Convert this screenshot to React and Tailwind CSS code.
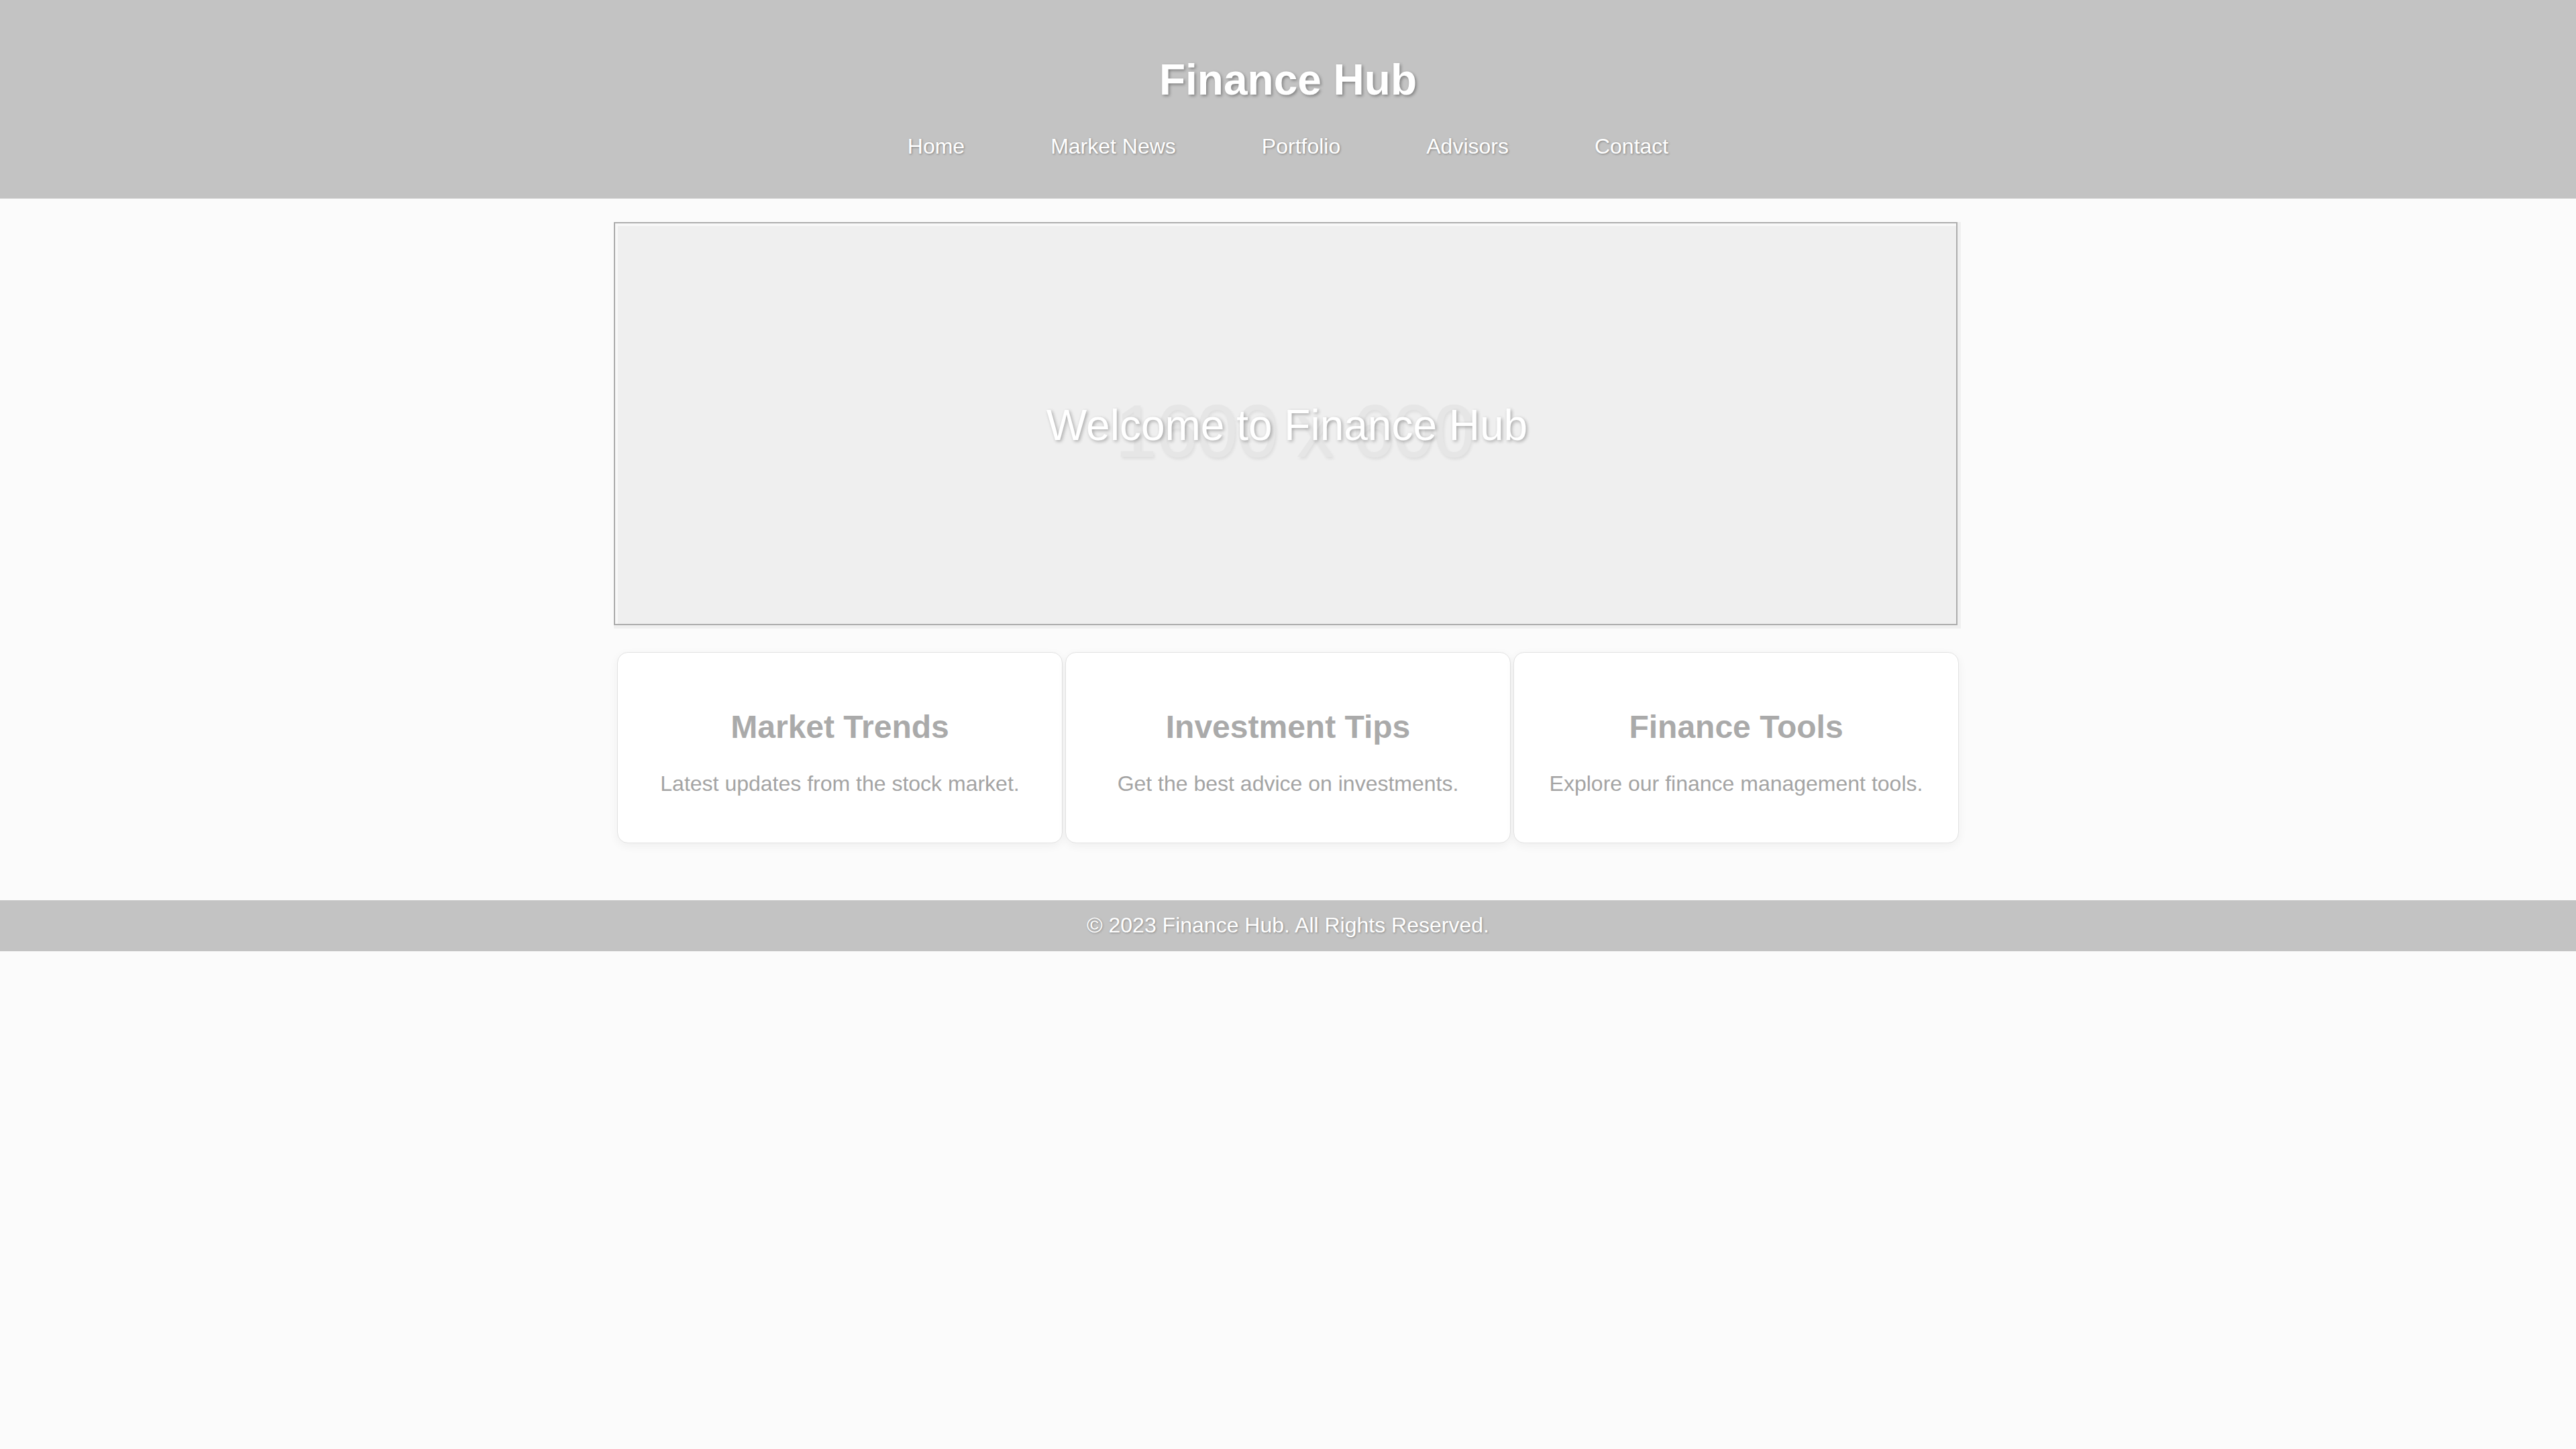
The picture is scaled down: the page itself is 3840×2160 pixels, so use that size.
import React from "react";

const links = ["Home", "Market News", "Portfolio", "Advisors", "Contact"];

const cards = [
  { title: "Market Trends", text: "Latest updates from the stock market." },
  { title: "Investment Tips", text: "Get the best advice on investments." },
  { title: "Finance Tools", text: "Explore our finance management tools." },
];

export default function App() {
  return (
    <div className="min-h-screen bg-[#fbfbfb] font-['Liberation_Sans',Arial,sans-serif]">
      {/* Header */}
      <header className="bg-[#c3c3c3] pt-[82px] pb-[59px] text-center text-white">
        <h1 className="text-[64px] font-bold leading-[74px] [text-shadow:2px_2px_4px_rgba(0,0,0,0.35)]">
          Finance Hub
        </h1>
        <nav className="mt-[44px] flex justify-center gap-[128px] text-[32px] leading-[37px] [text-shadow:1px_1px_3px_rgba(0,0,0,0.35)]">
          {links.map((l) => (
            <a key={l} href="#" className="text-white">
              {l}
            </a>
          ))}
        </nav>
      </header>

      {/* Main */}
      <main className="mx-auto w-[2000px] pt-[35px] pb-[85px]">
        {/* Hero */}
        <div className="-ml-[5px] -mr-[3px] h-[606px] bg-[#f0f0f0] pr-[5px] pb-[5px]">
          <div className="h-full border-2 border-[#adadad] bg-[#f8f8f8] pt-[4px] pl-[4px]">
            <div className="relative h-full bg-[#efefef]">
              <div className="absolute inset-0 flex items-center justify-center pl-[22px] pt-[18px]">
                <span className="text-[112px] leading-none tracking-[-2px] text-[#e6e6e6] [text-shadow:2px_3px_4px_rgba(0,0,0,0.07)]">
                  1600 x 600
                </span>
              </div>
              <div className="absolute inset-0 flex items-center justify-center">
                <h2 className="text-[64px] leading-[74px] text-white [text-shadow:2px_2px_5px_rgba(0,0,0,0.3)]">
                  Welcome to Finance Hub
                </h2>
              </div>
            </div>
          </div>
        </div>

        {/* Cards */}
        <div className="mt-[35px] grid grid-cols-3 gap-[4px]">
          {cards.map((c) => (
            <div
              key={c.title}
              className="rounded-[16px] border border-[#e2e2e2] bg-white pt-[83px] pb-[69px] text-center shadow-[0_4px_14px_rgba(0,0,0,0.05)]"
            >
              <h3 className="text-[48px] font-bold leading-[55px] text-[#aaaaaa]">
                {c.title}
              </h3>
              <p className="mt-[39px] text-[32px] leading-[37px] text-[#a4a4a4]">
                {c.text}
              </p>
            </div>
          ))}
        </div>
      </main>

      {/* Footer */}
      <footer className="flex h-[76px] items-center justify-center bg-[#c3c3c3] pb-[2px] text-[32px] text-white [text-shadow:1px_1px_3px_rgba(0,0,0,0.3)]">
        <p>© 2023 Finance Hub. All Rights Reserved.</p>
      </footer>
    </div>
  );
}
